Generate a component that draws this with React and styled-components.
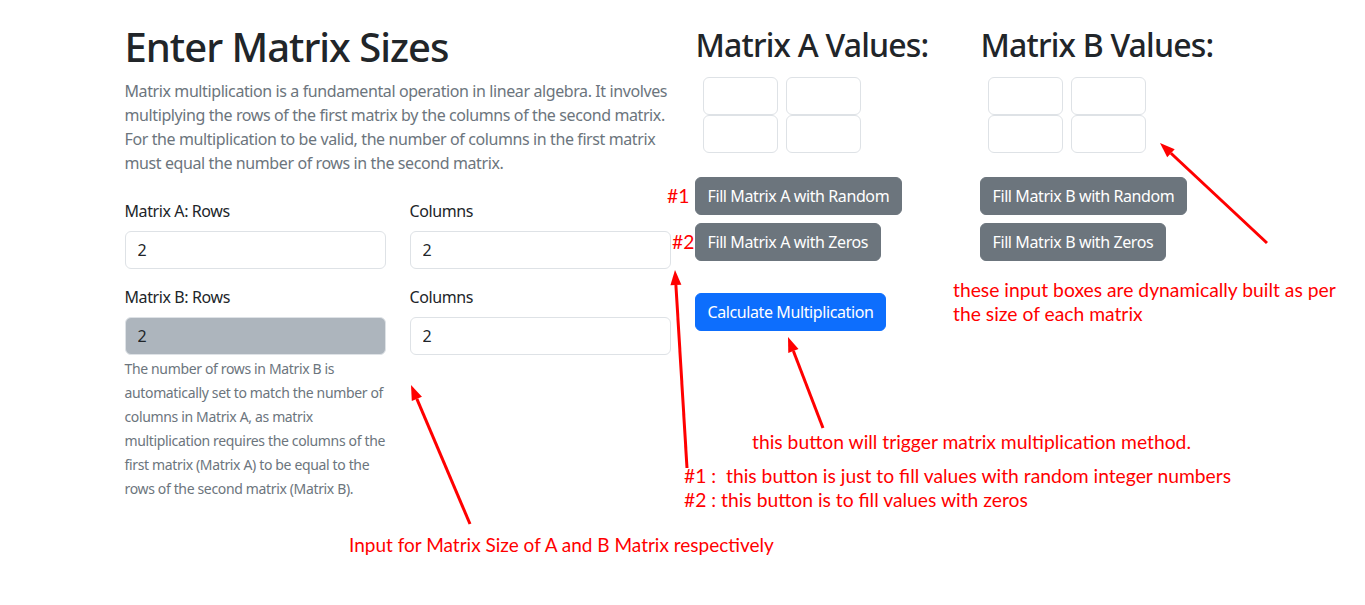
import React from "react";
import styled, { createGlobalStyle } from "styled-components";

const GlobalStyle = createGlobalStyle`
  *, *::before, *::after { box-sizing: border-box; }
  body {
    margin: 0;
    font-family: "Noto Sans", "Open Sans", sans-serif;
    font-size: 16px;
    line-height: 1.5;
    letter-spacing: -0.4px;
    color: #212529;
    background: #fff;
  }
`;

const Page = styled.div`
  position: relative;
  width: 100%;
  min-height: 605px;
`;

const Container = styled.div`
  width: 1140px;
  margin: 0 auto;
  padding: 23px 0 0;
  display: flex;
`;

const Col = styled.div`
  flex: 0 0 50%;
  padding: 0 12px;
`;

const InnerRow = styled.div`
  display: flex;
  margin: 0 -12px;
`;

const Title = styled.h1`
  font-size: 40px;
  font-weight: 500;
  line-height: 1.2;
  letter-spacing: -1px;
  margin: 0 0 8px;
`;

const Lead = styled.p`
  margin: 0 0 24px;
  color: #6c757d;
`;

const FieldRow = styled.div`
  display: flex;
  gap: 24px;
  margin-bottom: 16px;
`;

const Field = styled.div`
  flex: 1 1 0;
`;

const Label = styled.label`
  display: block;
  margin-bottom: 8px;
`;

const Input = styled.input`
  display: block;
  width: 100%;
  height: 38px;
  padding: 6px 12px;
  font: inherit;
  letter-spacing: inherit;
  color: #212529;
  background: ${(p) => (p.disabled ? "#adb5bd" : "#fff")};
  border: 1px solid #dee2e6;
  border-radius: 6px;
  outline: none;
`;

const Help = styled.p`
  margin: 2px 0 0;
  font-size: 14px;
  line-height: 24px;
  letter-spacing: -0.35px;
  color: #6c757d;
`;

const SubTitle = styled.h2`
  font-size: 32px;
  font-weight: 500;
  line-height: 1.2;
  letter-spacing: -0.8px;
  margin: 3px 0 12.6px;
  padding-left: ${(p) => p.$indent || 0}px;
`;

const Grid = styled.div`
  display: grid;
  grid-template-columns: repeat(2, 75px);
  column-gap: 8px;
  margin-left: ${(p) => p.$indent}px;
  margin-bottom: 24px;
`;

const Cell = styled.input`
  width: 75px;
  height: 38px;
  border: 1px solid #dee2e6;
  border-radius: 6px;
  background: #fff;
  outline: none;
  font: inherit;
`;

const Buttons = styled.div`
  display: flex;
  flex-direction: column;
  align-items: flex-start;
  gap: 8px;
`;

const Button = styled.button`
  display: inline-block;
  padding: 6px 12px;
  font-family: inherit;
  font-size: 16px;
  line-height: 24px;
  letter-spacing: -0.4px;
  color: #fff;
  background: ${(p) => (p.$primary ? "#0d6efd" : "#6c757d")};
  border: 1px solid ${(p) => (p.$primary ? "#0d6efd" : "#6c757d")};
  border-radius: 6px;
  cursor: pointer;
`;

const CalcWrap = styled.div`
  margin-top: 32px;
`;

const Note = styled.span`
  position: absolute;
  left: ${(p) => p.$x}px;
  top: ${(p) => p.$y}px;
  font-family: Lato, "Liberation Sans", sans-serif;
  font-size: ${(p) => p.$size || 19.3}px;
  line-height: 24px;
  letter-spacing: 0;
  color: #ff0000;
  white-space: pre;
`;

const Arrows = styled.svg`
  position: absolute;
  left: 0;
  top: 0;
  pointer-events: none;
`;

function Arrow({ x1, y1, x2, y2 }) {
  const dx = x2 - x1;
  const dy = y2 - y1;
  const len = Math.hypot(dx, dy);
  const ux = dx / len;
  const uy = dy / len;
  const hl = 15;
  const hw = 5.5;
  const bx = x2 - ux * hl;
  const by = y2 - uy * hl;
  const px = -uy;
  const py = ux;
  return (
    <g>
      <line x1={x1} y1={y1} x2={bx} y2={by} stroke="#ff0000" strokeWidth="3" />
      <polygon
        points={`${x2},${y2} ${bx + px * hw},${by + py * hw} ${bx - px * hw},${by - py * hw}`}
        fill="#ff0000"
      />
    </g>
  );
}

function MatrixColumn({ name, headIndent, gridIndent }) {
  return (
    <Col>
      <SubTitle $indent={headIndent}>Matrix {name} Values:</SubTitle>
      <Grid $indent={gridIndent}>
        <Cell />
        <Cell />
        <Cell />
        <Cell />
      </Grid>
      <Buttons>
        <Button>Fill Matrix {name} with Random</Button>
        <Button>Fill Matrix {name} with Zeros</Button>
      </Buttons>
    </Col>
  );
}

export default function App() {
  return (
    <Page>
      <GlobalStyle />
      <Container>
        <Col>
          <Title>Enter Matrix Sizes</Title>
          <Lead>
            Matrix multiplication is a fundamental operation in linear algebra. It involves
            multiplying the rows of the first matrix by the columns of the second matrix.
            For the multiplication to be valid, the number of columns in the first matrix
            must equal the number of rows in the second matrix.
          </Lead>
          <FieldRow>
            <Field>
              <Label>Matrix A: Rows</Label>
              <Input defaultValue="2" />
            </Field>
            <Field>
              <Label>Columns</Label>
              <Input defaultValue="2" />
            </Field>
          </FieldRow>
          <FieldRow>
            <Field>
              <Label>Matrix B: Rows</Label>
              <Input defaultValue="2" disabled />
              <Help>
                The number of rows in Matrix B is automatically set to match the number of
                columns in Matrix A, as matrix multiplication requires the columns of the
                first matrix (Matrix A) to be equal to the rows of the second matrix (Matrix B).
              </Help>
            </Field>
            <Field>
              <Label>Columns</Label>
              <Input defaultValue="2" />
            </Field>
          </FieldRow>
        </Col>
        <Col>
          <InnerRow>
            <MatrixColumn name="A" headIndent={1} gridIndent={8.5} />
            <MatrixColumn name="B" headIndent={1} gridIndent={8.5} />
          </InnerRow>
          <CalcWrap>
            <Button $primary>Calculate Multiplication</Button>
          </CalcWrap>
        </Col>
      </Container>

      <Arrows width="1365" height="605" viewBox="0 0 1365 605">
        <Arrow x1={1267} y1={243} x2={1160} y2={143} />
        <Arrow x1={823} y1={428} x2={788} y2={337} />
        <Arrow x1={687} y1={468} x2={675} y2={270} />
        <Arrow x1={470} y1={524} x2={411} y2={385} />
      </Arrows>

      <Note $x={667} $y={184}>#1</Note>
      <Note $x={672} $y={230}>#2</Note>
      <Note $x={953} $y={278}>these input boxes are dynamically built as per</Note>
      <Note $x={953} $y={302}>the size of each matrix</Note>
      <Note $x={752} $y={430}>this button will trigger matrix multiplication method.</Note>
      <Note $x={684} $y={464}>{"#1 :  this button is just to fill values with random integer numbers"}</Note>
      <Note $x={684} $y={488}>#2 : this button is to fill values with zeros</Note>
      <Note $x={349} $y={533} $size={19}>Input for Matrix Size of A and B Matrix respectively</Note>
    </Page>
  );
}
